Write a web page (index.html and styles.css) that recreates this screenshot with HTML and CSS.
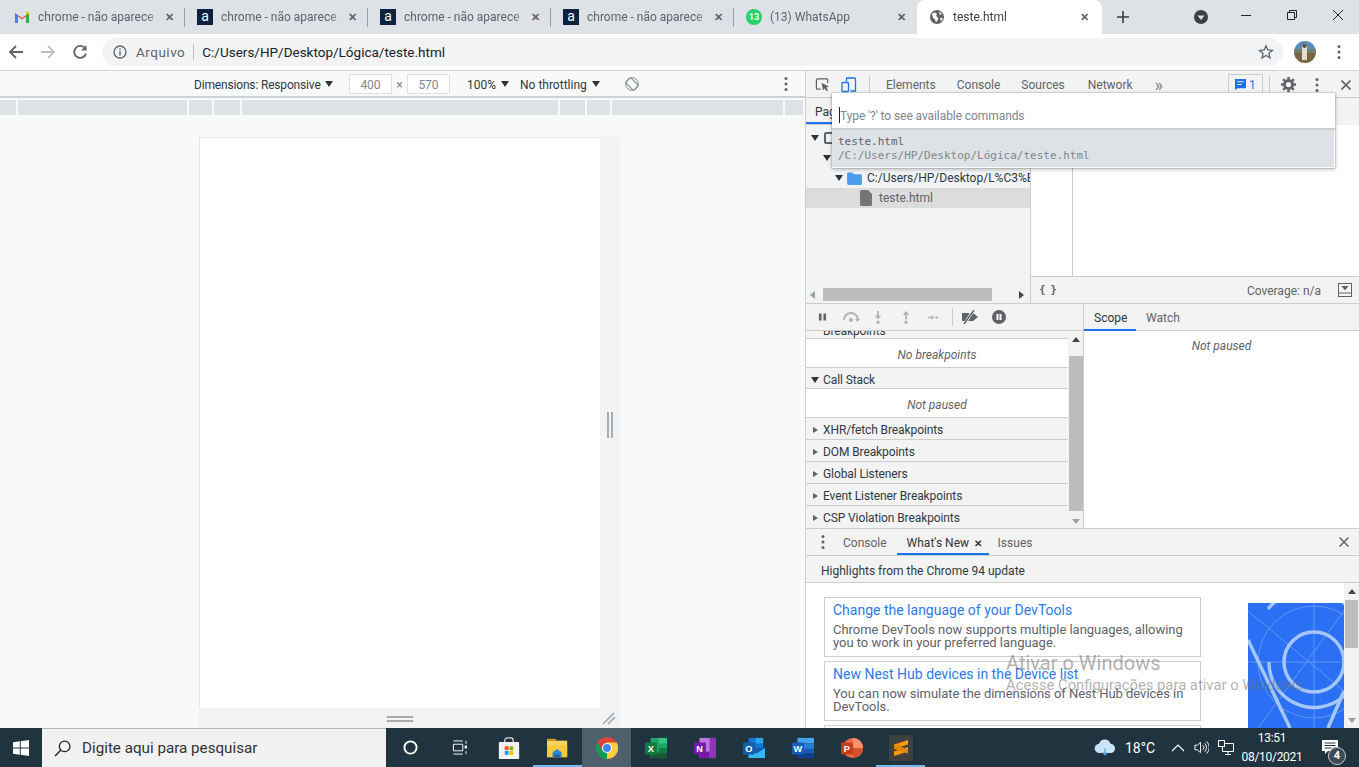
FILE: index.html
```html
<!DOCTYPE html>
<html lang="pt-BR">
<head>
<meta charset="utf-8">
<title>teste.html</title>
<link rel="stylesheet" href="styles.css">
</head>
<body>
<div class="window">

	<!-- abas -->
	<div class="tabstrip">
		<div class="tab">
			<svg class="favicon" viewBox="0 0 16 16"><path d="M1 14V4l7 5 7-5v10h-3V7.500L8 10.500 4 7.500V14z" fill="#ea4335"/><path d="M1 14V4l3 2.200V14z" fill="#4285f4"/><path d="M12 14V6.200L15 4v10z" fill="#34a853"/><path d="M12 6.200 15 4v-.5L13 2.500 12 3.500z" fill="#fbbc04"/></svg>
			<span class="tab_title">chrome - não aparece</span><span class="tab_x">✕</span>
		</div>
		<div class="tab">
			<span class="favicon fav_a">a</span>
			<span class="tab_title">chrome - não aparece</span><span class="tab_x">✕</span>
		</div>
		<div class="tab">
			<span class="favicon fav_a">a</span>
			<span class="tab_title">chrome - não aparece</span><span class="tab_x">✕</span>
		</div>
		<div class="tab">
			<span class="favicon fav_a">a</span>
			<span class="tab_title">chrome - não aparece</span><span class="tab_x">✕</span>
		</div>
		<div class="tab tab_last">
			<span class="favicon fav_wa">13</span>
			<span class="tab_title">(13) WhatsApp</span><span class="tab_x">✕</span>
		</div>
		<div class="tab tab_on">
			<svg class="favicon" viewBox="0 0 16 16"><circle cx="8" cy="8" r="7" fill="#5f6368"/><path d="M3 4.500 6 3.500l2 1.500-1 2 2 1.500v2l-2 3-1-3-2-1.500zM10 2.500l3 2-2 1.500zM11 9h3l-2 3.500z" fill="#fff"/></svg>
			<span class="tab_title">teste.html</span><span class="tab_x">✕</span>
		</div>
		<svg class="new_tab" viewBox="0 0 12 12"><path d="M6 0v12M0 6h12" stroke="#3c4043" stroke-width="1.600"/></svg>
		<svg class="tab_search" viewBox="0 0 14 14"><circle cx="7" cy="7" r="7" fill="#3c4043"/><path d="M3.500 5.500h7L7 10z" fill="#dee1e6"/></svg>
		<div class="win_btns">
			<svg viewBox="0 0 12 12"><path d="M1 6.500h10" stroke="#222" stroke-width="1"/></svg>
			<svg viewBox="0 0 12 12"><path d="M1.500 3.500h7v7h-7zM3.500 3.500v-2h7v7h-2" fill="none" stroke="#222"/></svg>
			<svg viewBox="0 0 12 12"><path d="M1 1l10 10M11 1 1 11" stroke="#222"/></svg>
		</div>
	</div>

	<!-- barra de endereco -->
	<div class="toolbar">
		<svg class="nav_ic" viewBox="0 0 16 16"><path d="M15 8H2M8 2 2 8l6 6" fill="none" stroke="#5f6368" stroke-width="1.800"/></svg>
		<svg class="nav_ic" viewBox="0 0 16 16"><path d="M1 8h13M8 2l6 6-6 6" fill="none" stroke="#bdc1c6" stroke-width="1.800"/></svg>
		<svg class="nav_ic" viewBox="0 0 16 16"><path d="M13.500 5A6 6 0 1 0 14 9.500" fill="none" stroke="#5f6368" stroke-width="1.800"/><path d="M14.500 1v5.500H9z" fill="#5f6368"/></svg>
		<div class="omnibox">
			<svg class="info_ic" viewBox="0 0 14 14"><circle cx="7" cy="7" r="6" fill="none" stroke="#5f6368" stroke-width="1.300"/><path d="M7 6v4.500M7 3.500V5" stroke="#5f6368" stroke-width="1.400"/></svg>
			<span class="omni_label">Arquivo</span>
			<span class="omni_url">C:/Users/HP/Desktop/Lógica/teste.html</span>
			<svg class="star_ic" viewBox="0 0 16 16"><path d="M8 1.800 9.800 6l4.600.4-3.500 3 1.100 4.500L8 11.500 4 13.900l1.100-4.500-3.500-3L6.200 6z" fill="none" stroke="#5f6368" stroke-width="1.300"/></svg>
		</div>
		<svg class="avatar" viewBox="0 0 22 22"><defs><clipPath id="av"><circle cx="11" cy="11" r="11"/></clipPath></defs><g clip-path="url(#av)"><rect width="22" height="10" fill="#5b89b8"/><rect y="8" width="22" height="5" fill="#6f7f6c"/><rect y="12" width="22" height="10" fill="#7a6244"/><rect x="8" y="5" width="5" height="14" fill="#e4dccd"/><circle cx="10.500" cy="5" r="2" fill="#6b4a30"/></g></svg>
		<svg class="kebab kebab_top" viewBox="0 0 4 16"><circle cx="2" cy="2.500" r="1.500"/><circle cx="2" cy="8" r="1.500"/><circle cx="2" cy="13.500" r="1.500"/></svg>
	</div>

	<div class="main">

		<!-- area emulada -->
		<div class="viewport">
			<div class="device_bar">
				<span class="dim_label">Dimensions: Responsive <i class="caret"></i></span>
				<span class="dim_box">400</span><span class="dim_x">×</span><span class="dim_box">570</span>
				<span class="dim_zoom">100% <i class="caret"></i></span>
				<span class="dim_throttle">No throttling <i class="caret"></i></span>
				<svg class="rotate_ic" viewBox="0 0 16 16"><circle cx="8" cy="8" r="6.300" fill="none" stroke="#80868b"/><rect x="4.500" y="2.500" width="7" height="11" rx="1" transform="rotate(-45 8 8)" fill="#f8f9f9" stroke="#80868b"/></svg>
				<svg class="kebab kebab_dev" viewBox="0 0 4 16"><circle cx="2" cy="2.500" r="1.500"/><circle cx="2" cy="8" r="1.500"/><circle cx="2" cy="13.500" r="1.500"/></svg>
			</div>
			<div class="media_bar">
				<span class="m1"></span><span class="m2"></span><span class="m3"></span><span class="m4"></span><span class="m5"></span><span class="m4"></span><span class="m3"></span><span class="m2"></span><span class="m1"></span>
			</div>
			<div class="stage">
				<div class="frame">
					<div class="page"></div>
					<div class="gutter_r"><span class="grip_v"></span></div>
					<div class="gutter_b"><span class="grip_h"></span></div>
					<div class="gutter_c">
						<svg viewBox="0 0 14 14"><path d="M1 13 12 2M6 13l7-7" stroke="#a0a4a8" stroke-width="1.500"/></svg>
					</div>
				</div>
			</div>
		</div>

		<!-- devtools -->
		<div class="devtools">
			<div class="dt_tabs">
				<svg class="dt_ic" viewBox="0 0 16 16"><path d="M6 13H2.500a1 1 0 0 1-1-1V3a1 1 0 0 1 1-1h10a1 1 0 0 1 1 1v3" fill="none" stroke="#5f6368" stroke-width="1.300"/><path d="M7 6.500 15 10l-3 1.200 2 3-1.500 1-2-3L8.500 14z" fill="#5f6368"/></svg>
				<svg class="dt_ic dt_ic2" viewBox="0 0 16 16"><path d="M5.500 1.500h8a1 1 0 0 1 1 1v12h-5M5.500 1.500V5" fill="none" stroke="#1a73e8" stroke-width="1.300"/><rect x="1" y="6" width="6.500" height="9" rx="1" fill="none" stroke="#1a73e8" stroke-width="1.300"/></svg>
				<span class="dt_sep"></span>
				<span class="dt_tab dt_t1">Elements</span>
				<span class="dt_tab">Console</span>
				<span class="dt_tab">Sources</span>
				<span class="dt_tab dt_t4">Network</span>
				<span class="dt_more">»</span>
				<span class="dt_badge"><svg viewBox="0 0 12 12"><path d="M0 0h12v10H3l-3 2z" fill="#1a73e8"/><path d="M2.500 3h7M2.500 6h5" stroke="#fff"/></svg>1</span>
				<span class="dt_sep dt_sep2"></span>
				<svg class="gear" viewBox="0 0 16 16"><circle cx="8" cy="8" r="4.300" fill="none" stroke="#5f6368" stroke-width="3"/><path d="M8 0v3M8 13v3M0 8h3M13 8h3M2.300 2.300l2.100 2.100M11.600 11.600l2.100 2.100M13.700 2.300l-2.100 2.100M4.400 11.600l-2.100 2.100" stroke="#5f6368" stroke-width="2.600"/></svg>
				<svg class="kebab kebab_dt" viewBox="0 0 4 16"><circle cx="2" cy="2.500" r="1.500"/><circle cx="2" cy="8" r="1.500"/><circle cx="2" cy="13.500" r="1.500"/></svg>
				<svg class="dt_close" viewBox="0 0 10 10"><path d="M.5.5l9 9M9.500.5l-9 9" stroke="#5f6368" stroke-width="1.600"/></svg>
			</div>

			<div class="sources">
				<div class="navigator">
					<div class="nav_tabs"><span class="nav_tab">Page</span></div>
					<div class="tree">
						<div class="tree_row tr0"><i class="caret caret_d"></i><span class="sq_ic"></span></div>
						<div class="tree_row tr1"><i class="caret caret_d"></i></div>
						<div class="tree_row tr2"><i class="caret caret_d"></i>
							<svg class="folder_ic" viewBox="0 0 16 14"><path d="M0 2a1.500 1.500 0 0 1 1.500-1.500h4L7.500 2.500h7A1.500 1.500 0 0 1 16 4v8.500a1.500 1.500 0 0 1-1.500 1.500h-13A1.500 1.500 0 0 1 0 12.500z" fill="#4a9cf0"/></svg>
							<span>C:/Users/HP/Desktop/L%C3%B</span></div>
						<div class="tree_row tr3">
							<svg class="file_ic" viewBox="0 0 12 16"><path d="M0 1.500A1.500 1.500 0 0 1 1.500 0H8l4 4v10.500a1.500 1.500 0 0 1-1.500 1.500h-9A1.500 1.500 0 0 1 0 14.500z" fill="#757575"/></svg>
							<span>teste.html</span></div>
					</div>
					<div class="h_scroll">
						<i class="arr_l"></i><span class="h_thumb"></span><i class="arr_r"></i>
					</div>
				</div>
				<div class="editor">
					<div class="editor_body"><span class="gutter_line"></span></div>
					<div class="editor_foot">
						<span class="braces">{ }</span>
						<span class="coverage">Coverage: n/a</span>
						<svg class="foot_ic" viewBox="0 0 14 14"><rect x=".5" y=".5" width="13" height="13" fill="none" stroke="#5f6368"/><path d="M.5 10h13" stroke="#5f6368"/><path d="M3.500 3h7L7 7.500z" fill="#5f6368"/></svg>
					</div>
				</div>
			</div>

			<div class="debugger">
				<div class="dbg_left">
					<div class="dbg_tools">
						<svg class="db1" viewBox="0 0 10 10"><path d="M1 1h3v8H1zM6 1h3v8H6z" fill="#5f6368"/></svg>
						<svg class="db2" viewBox="0 0 18 10"><path d="M2 8a7 7 0 0 1 14 0" fill="none" stroke="#b0b4b8" stroke-width="2"/><circle cx="9" cy="8" r="2" fill="#b0b4b8"/><path d="M13 7h5l-2.500 3z" fill="#b0b4b8"/></svg>
						<svg class="db3 db_into" viewBox="0 0 10 14"><path d="M5 0v6" stroke="#b0b4b8" stroke-width="2"/><path d="M1.500 5h7L5 9z" fill="#b0b4b8"/><circle cx="5" cy="12" r="1.800" fill="#b0b4b8"/></svg>
						<svg class="db3 db_out" viewBox="0 0 10 14"><path d="M5 9V3" stroke="#b0b4b8" stroke-width="2"/><path d="M1.500 4h7L5 0z" fill="#b0b4b8"/><circle cx="5" cy="12" r="1.800" fill="#b0b4b8"/></svg>
						<svg class="db3 db_step" viewBox="0 0 14 10"><path d="M0 5h6" stroke="#b0b4b8" stroke-width="2"/><path d="M5 1.500v7L9 5z" fill="#b0b4b8"/><circle cx="12" cy="5" r="1.800" fill="#b0b4b8"/></svg>
						<span class="dt_sep dbg_sep"></span>
						<svg class="db4" viewBox="0 0 18 14"><path d="M1 3h11l5 4-5 4H1z" fill="#5f6368"/><path d="M3 15 13-1" stroke="#f1f3f4" stroke-width="3"/><path d="M3 14 13 0" stroke="#5f6368" stroke-width="1.500"/></svg>
						<svg class="db5" viewBox="0 0 14 14"><circle cx="7" cy="7" r="7" fill="#5f6368"/><path d="M4.500 4h2v6h-2zM7.500 4h2v6h-2z" fill="#fff"/></svg>
					</div>
					<div class="sections">
						<div class="sec_list">
							<div class="sec_head sec_cut"><span>Breakpoints</span></div>
							<div class="sec_empty">No breakpoints</div>
							<div class="sec_head sec_open"><i class="caret caret_d"></i>Call Stack</div>
							<div class="sec_empty">Not paused</div>
							<div class="sec_head"><i class="caret_r"></i>XHR/fetch Breakpoints</div>
							<div class="sec_head"><i class="caret_r"></i>DOM Breakpoints</div>
							<div class="sec_head"><i class="caret_r"></i>Global Listeners</div>
							<div class="sec_head"><i class="caret_r"></i>Event Listener Breakpoints</div>
							<div class="sec_head"><i class="caret_r"></i>CSP Violation Breakpoints</div>
						</div>
						<div class="v_scroll">
							<i class="arr_u"></i><span class="v_thumb"></span><i class="arr_d"></i>
						</div>
					</div>
				</div>
				<div class="dbg_right">
					<div class="scope_tabs">
						<span class="scope_tab scope_on">Scope</span>
						<span class="scope_tab">Watch</span>
					</div>
					<div class="scope_empty">Not paused</div>
				</div>
			</div>

			<div class="drawer">
				<div class="drawer_tabs">
					<svg class="kebab kebab_dr" viewBox="0 0 4 16"><circle cx="2" cy="2.500" r="1.500"/><circle cx="2" cy="8" r="1.500"/><circle cx="2" cy="13.500" r="1.500"/></svg>
					<span class="dr_tab dr_first">Console</span>
					<span class="dr_tab dr_on">What's New <b>✕</b></span>
					<span class="dr_tab dr_last">Issues</span>
					<svg class="dr_close" viewBox="0 0 10 10"><path d="M.5.5l9 9M9.500.5l-9 9" stroke="#5f6368" stroke-width="1.500"/></svg>
				</div>
				<div class="drawer_head">Highlights from the Chrome 94 update</div>
				<div class="drawer_body">
					<div class="news">
						<div class="card">
							<div class="card_t">Change the language of your DevTools</div>
							<div class="card_p">Chrome DevTools now supports multiple languages, allowing you to work in your preferred language.</div>
						</div>
						<div class="card">
							<div class="card_t">New Nest Hub devices in the Device list</div>
							<div class="card_p">You can now simulate the dimensions of Nest Hub devices in DevTools.</div>
						</div>
						<div class="card"></div>
					</div>
					<svg class="news_img" viewBox="0 0 96 125"><rect width="96" height="125" fill="#2b70f4"/><g fill="none" stroke="#5f96f7"><path d="M0 8 96 88M96 8 10 125M0 59h96M66 0v125"/><circle cx="66" cy="59" r="56"/></g><g fill="none" stroke="#a6c6fb" stroke-width="3.500"><circle cx="66" cy="59" r="30"/><path d="M0 37 42 125M96 88 80 125M20 6A50 45 0 0 1 110 24"/><path d="M21 59A45 45 0 0 0 96 93"/></g></svg>
					<div class="v_scroll v_scroll2">
						<i class="arr_u"></i><span class="v_thumb"></span><i class="arr_d"></i>
					</div>
				</div>
			</div>

			<!-- paleta de comandos -->
			<div class="cmd">
				<div class="cmd_input"><i class="cmd_cursor"></i>Type '?' to see available commands</div>
				<div class="cmd_item">
					<div class="cmd_name">teste.html</div>
					<div class="cmd_path">/C:/Users/HP/Desktop/Lógica/teste.html</div>
				</div>
			</div>
		</div>
	</div>

	<!-- barra de tarefas -->
	<div class="taskbar">
		<div class="start"><svg viewBox="0 0 16 16"><path d="M0 2.300 6.800 1.300v6.200H0zM7.700 1.200 16 0v7.500H7.700zM0 8.400h6.800v6.300L0 13.700zM7.700 8.400H16V16l-8.300-1.200z" fill="#fff"/></svg></div>
		<div class="search">
			<svg viewBox="0 0 16 16"><circle cx="10" cy="6" r="5" fill="none" stroke="#222" stroke-width="1.200"/><path d="M6.300 9.700 1 15" stroke="#222" stroke-width="1.400"/></svg>
			<span>Digite aqui para pesquisar</span>
		</div>
		<div class="apps">
			<div class="app"><svg viewBox="0 0 16 16"><circle cx="8" cy="8" r="6.500" fill="none" stroke="#fff" stroke-width="2"/></svg></div>
			<div class="app"><svg viewBox="0 0 16 16"><path d="M1.500 4.500h10v7h-10zM1.500 1h10M1.500 15h10M15 1v3M15 12v3" fill="none" stroke="#fff"/><rect x="13.500" y="6" width="3" height="3" fill="#fff"/></svg></div>
			<div class="app"><svg viewBox="0 0 24 26"><path d="M7 7V4a3 3 0 0 1 3-3h4a3 3 0 0 1 3 3v3" fill="none" stroke="#ddd" stroke-width="1.500"/><rect y="6" width="24" height="20" rx="1" fill="#f3f3f3"/><rect x="7" y="11" width="4.500" height="4.500" fill="#f25022"/><rect x="12.500" y="11" width="4.500" height="4.500" fill="#7fba00"/><rect x="7" y="16.500" width="4.500" height="4.500" fill="#00a4ef"/><rect x="12.500" y="16.500" width="4.500" height="4.500" fill="#ffb900"/></svg></div>
			<div class="app app_run"><svg viewBox="0 0 24 22"><path d="M0 1h9l2 2h-11z" fill="#d19a14"/><rect y="3" width="22" height="18" fill="#fbd35c"/><path d="M0 8h22v13H0z" fill="#f8c93f"/><path d="M6 21v-5l5-4 5 4v5z" fill="#2a8ad4"/><path d="M8 21v-3h6v3z" fill="#1d5f9e"/></svg></div>
			<div class="app app_on"><svg viewBox="0 0 24 24"><circle cx="12" cy="12" r="12" fill="#db4437"/><path d="M12 12 1.600 18A12 12 0 0 0 14 23.800z" fill="#0f9d58"/><path d="M12 6h10.500A12 12 0 0 1 12 24z" fill="#ffcd40"/><path d="M1.600 18A12 12 0 0 1 1.600 6L7 15z" fill="#0f9d58"/><circle cx="12" cy="12" r="5.500" fill="#fff"/><circle cx="12" cy="12" r="4.300" fill="#4285f4"/></svg></div>
			<div class="app"><svg viewBox="0 0 24 24"><rect x="6" y="1" width="18" height="22" fill="#21a366"/><rect x="15" y="1" width="9" height="6" fill="#33c481"/><rect x="15" y="12" width="9" height="5" fill="#107c41"/><rect x="6" y="17" width="18" height="6" fill="#185c37"/><rect y="6" width="13" height="13" rx="1" fill="#107c41"/><text x="3" y="16" class="app_letter">X</text></svg></div>
			<div class="app"><svg viewBox="0 0 24 24"><rect x="6" y="1" width="18" height="22" fill="#ba77e0"/><rect x="17" y="1" width="7" height="22" fill="#9332bf"/><rect x="6" y="16" width="11" height="7" fill="#7719aa"/><rect y="6" width="13" height="13" rx="1" fill="#7719aa"/><text x="2.500" y="16" class="app_letter">N</text></svg></div>
			<div class="app"><svg viewBox="0 0 24 24"><rect x="6" y="1" width="16" height="12" fill="#0f78d4"/><rect x="14" y="1" width="8" height="6" fill="#28a8ea"/><path d="M6 12h18v11H6z" fill="#0a5fb0"/><path d="M6 12l9 6 9-6v11H6z" fill="#35b8f1"/><rect y="6" width="13" height="13" rx="1" fill="#0f5fa8"/><text x="2.500" y="16" class="app_letter">O</text></svg></div>
			<div class="app"><svg viewBox="0 0 24 24"><rect x="6" y="1" width="18" height="6" fill="#41a5ee"/><rect x="6" y="7" width="18" height="6" fill="#2b7cd3"/><rect x="6" y="13" width="18" height="5" fill="#185abd"/><rect x="6" y="18" width="18" height="5" fill="#103f91"/><rect y="6" width="13" height="13" rx="1" fill="#185abd"/><text x="1.500" y="16" class="app_letter">W</text></svg></div>
			<div class="app"><svg viewBox="0 0 24 24"><circle cx="13" cy="12" r="11" fill="#ed6c47"/><path d="M13 1a11 11 0 0 1 11 11H13z" fill="#ff8f6b"/><path d="M13 12h11a11 11 0 0 1-11 11z" fill="#d35230"/><rect y="6" width="13" height="13" rx="1" fill="#c43e1c"/><text x="3" y="16" class="app_letter">P</text></svg></div>
			<div class="app app_run app_sub"><svg viewBox="0 0 24 26"><rect width="24" height="26" rx="1" fill="#3f3f3f"/><path d="M5 9.500 19 5v4.500L5 14zM5 16.500 19 12v4.500L5 21z" fill="#ff9800"/><path d="M5 9.500 19 14v4.500L5 14z" fill="#e08600"/></svg></div>
		</div>
		<div class="tray">
			<svg class="cloud" viewBox="0 0 24 18"><path d="M6 15a5 5 0 0 1-.5-10A6.500 6.500 0 0 1 18 5a5 5 0 0 1 0 10z" fill="#c9e4f7"/><path d="M12 10v7M9.500 14.500 12 17l2.500-2.500" fill="none" stroke="#4aa3df" stroke-width="1.300"/></svg>
			<span class="temp">18°C</span>
			<svg class="tray_ic chev" viewBox="0 0 14 8"><path d="M1 7l6-6 6 6" fill="none" stroke="#fff" stroke-width="1.200"/></svg>
			<svg class="tray_ic spk" viewBox="0 0 16 16"><path d="M1 5.500h2.500L7 2.500v11l-3.500-3H1z" fill="none" stroke="#fff"/><path d="M9.500 5.500a3.500 3.500 0 0 1 0 5M11.500 3.500a6.500 6.500 0 0 1 0 9M13.500 1.500a9 9 0 0 1 0 13" fill="none" stroke="#fff"/></svg>
			<svg class="tray_ic net" viewBox="0 0 16 16"><path d="M4.500 3.500h11v8h-11zM7 14.500h6M10 11.500v3" fill="none" stroke="#fff"/><rect x=".5" y=".5" width="6" height="6" fill="#20343f" stroke="#fff"/></svg>
			<div class="clock"><div>13:51</div><div>08/10/2021</div></div>
			<div class="notif">
				<svg viewBox="0 0 16 16"><path d="M0 0h16v11H6l-3 3v-3H0z" fill="#fff"/><path d="M2.500 3h11M2.500 5.500h11M2.500 8h7" stroke="#20343f"/></svg>
				<span class="notif_n">4</span>
			</div>
		</div>
	</div>

	<!-- marca d'agua -->
	<div class="watermark">
		<div class="wm1">Ativar o Windows</div>
		<div class="wm2">Acesse Configurações para ativar o Windows.</div>
	</div>
</div>
</body>
</html>
```

FILE: styles.css
```css
* {margin:0; padding:0; box-sizing:border-box}
html, body {height:100%; overflow:hidden}
body {font-family:Roboto, "Liberation Sans", sans-serif; font-size:12px; color:#303942}
svg {display:block; flex:none}
i {font-style:normal}

.window {position:relative; display:flex; flex-direction:column; height:767px; width:1359px}

/* abas */
.tabstrip {display:flex; align-items:center; height:34px; background:#dee1e6; padding-left:2px; flex:none}
.tab {position:relative; display:flex; align-items:center; width:183px; height:34px; padding-left:12px}
.tab::after {content:""; position:absolute; right:0; top:8px; width:1px; height:19px; background:#9aa0a6}
.tab_last::after, .tab_on::after {display:none}
.tab_on {background:#fff; border-radius:8px 8px 0 0; width:185px}
.favicon {width:16px; height:16px; flex:none}
.fav_a {background:#0b2340; color:#fff; font-size:14px; line-height:15px; text-align:center}
.fav_wa {background:#25d366; border-radius:50%; color:#fff; font-size:9px; font-weight:700; line-height:16px; text-align:center}
.tab_title {width:124px; margin-left:8px; overflow:hidden; white-space:nowrap; color:#5f6368; font-size:12px; -webkit-mask-image:linear-gradient(90deg,#000 88%,transparent)}
.tab_on .tab_title {color:#3c4043}
.tab_x {margin-left:3px; font-size:11px; font-weight:700; color:#5f6368}
.new_tab {width:12px; height:12px; margin-left:15px}
.tab_search {width:14px; height:14px; margin-left:65px}
.win_btns {display:flex; align-items:center; gap:34px; margin-left:auto; padding-right:15px; height:30px; margin-top:-4px}
.win_btns svg {width:12px; height:12px}

/* barra de endereco */
.toolbar {position:relative; display:flex; align-items:center; height:37px; background:#fff; padding-left:8px; flex:none; border-bottom:1px solid #d0d2d5}
.nav_ic {width:16px; height:16px; margin-right:16px}
.omnibox {display:flex; align-items:center; width:1181px; height:28px; margin-left:-2px; background:#f1f3f4; border-radius:14px; padding-left:11px}
.info_ic {width:14px; height:14px}
.omni_label {margin-left:9px; padding-right:8px; border-right:1px solid #bdc1c6; line-height:16px; color:#5f6368; font-size:13.500px; letter-spacing:.5px}
.omni_url {margin-left:8px; font-size:13.500px; color:#202124}
.star_ic {width:16px; height:16px; margin-left:auto; margin-right:9px}
.avatar {width:22px; height:22px; margin-left:11px}
.kebab {width:4px; height:16px; fill:#5f6368}
.kebab_top {margin-left:21px}

.main {display:flex; flex:1; min-height:0}

/* area emulada */
.viewport {display:flex; flex-direction:column; width:805px; background:#f8f9f9; flex:none}
.device_bar {display:flex; align-items:center; height:27px; flex:none; padding-left:194px; border-bottom:2px solid #cfd0d2; color:#303942}
.caret {display:inline-block; width:0; height:0; border:4px solid transparent; border-top:6px solid #333; border-bottom:0; vertical-align:2px; margin-left:2px}
.dim_label {width:155px; letter-spacing:-.17px; padding-top:2px}
.dim_box {width:43px; height:20px; border:1px solid #e0e0e0; background:#fff; text-align:center; line-height:20px; color:#80868b}
.dim_x {width:15px; text-align:center; color:#80868b; padding-top:3px}
.dim_zoom {margin-left:17px; width:53px; padding-top:2px}
.dim_throttle {width:104px; padding-top:2px}
.rotate_ic {width:16px; height:16px}
.kebab_dev {margin-left:auto; margin-right:17px}
.media_bar {display:flex; gap:2px; height:16px; margin-top:2px; padding-right:2px; flex:none}
.media_bar span {background:#dee1e6; height:15px}
.media_bar .m1 {width:16px}
.media_bar .m2 {width:169px}
.media_bar .m3 {width:23px}
.media_bar .m4 {width:26px}
.media_bar .m5 {width:316px}
.media_bar .m4 ~ .m4 {width:25px}
.media_bar .m2 ~ .m2 {width:171px}
.media_bar .m1:last-child {flex:1}
.stage {flex:1; padding:21px 0 0 199px; min-height:0}
.frame {display:grid; grid-template-columns:401px 20px; grid-template-rows:571px 20px; width:421px; height:591px}
.page {background:#fff; border:1px solid #e4e5e6; border-right:0; border-bottom:0}
.gutter_r {display:flex; justify-content:center; align-items:center; background:#f1f3f4}
.grip_v {width:6px; height:26px; border-left:2px solid #a8abae; border-right:2px solid #a8abae; margin-top:4px}
.gutter_b {display:flex; justify-content:center; align-items:flex-start; background:#f1f3f4; padding-top:8px}
.grip_h {width:26px; height:6px; border-top:2px solid #a8abae; border-bottom:2px solid #a8abae}
.gutter_c {background:#f1f3f4; display:flex; align-items:flex-end}
.gutter_c svg {width:14px; height:14px; margin-left:2px; margin-bottom:3px}

/* devtools */
.devtools {position:relative; display:flex; flex-direction:column; flex:1; min-width:0; border-left:1px solid #cbcdcf; background:#fff}
.dt_tabs {display:flex; align-items:center; height:27px; flex:none; background:#f3f3f3; border-bottom:1px solid #cbcdcf; padding-left:9px; padding-top:1px; color:#5f6368}
.dt_ic {width:15px; height:15px}
.dt_ic2 {margin-left:11px; width:16px; height:17px}
.dt_sep {width:1px; height:17px; background:#cbcdcf; margin-left:12px}
.dt_tab {margin-left:21px}
.dt_t1 {margin-left:16px}
.dt_t4 {margin-left:23px}
.dt_more {margin-left:22px; font-size:18px; line-height:14px; color:#80868b}
.dt_badge {display:flex; align-items:center; gap:3px; width:35px; height:21px; margin-left:65px; padding-left:6px; border:1px solid #cbcdcf; color:#1a73e8; font-size:12px}
.dt_badge svg {width:11px; height:11px}
.dt_sep2 {margin-left:6px}
.gear {width:15px; height:15px; margin-left:11px}
.kebab_dt {margin-left:19px}
.dt_close {width:10px; height:10px; margin-left:22px}

.sources {display:flex; height:206px; flex:none; border-bottom:1px solid #cbcdcf; background:#f3f3f3}
.navigator {display:flex; flex-direction:column; width:225px; flex:none; border-right:1px solid #cbcdcf; background:#f1f3f4}
.nav_tabs {height:27px; flex:none; border-bottom:1px solid #cbcdcf; background:#f3f3f3}
.nav_tab {display:inline-block; width:60px; height:26px; padding:7px 0 0 9px; border-bottom:2px solid #1a73e8; color:#333}
.tree {flex:1; padding-top:3px; min-height:0}
.tree_row {display:flex; align-items:center; height:20px; white-space:nowrap; overflow:hidden; color:#303942}
.tr0 {padding-left:5px}
.tr1 {padding-left:17px}
.tr2 {padding-left:29px}
.tr3 {padding-left:54px; background:#dcdcdc; color:#5f6368}
.caret_d {margin-left:0; vertical-align:0}
.sq_ic {width:11px; height:12px; margin-left:5px; border:2px solid #5f6368; border-radius:2px}
.folder_ic {width:15px; height:13px; margin-left:4px; margin-right:5px}
.file_ic {width:12px; height:16px; margin-right:7px}
.h_scroll {display:flex; align-items:center; height:15px; margin-bottom:1px; flex:none; padding-left:4px}
.arr_l {width:0; height:0; border:4px solid transparent; border-left:0; border-right:5px solid #9aa0a6}
.arr_r {width:0; height:0; border:4px solid transparent; border-right:0; border-left:5px solid #444; margin-left:27px}
.h_thumb {width:169px; height:13px; margin-left:8px; background:#bdbdbd}
.editor {display:flex; flex-direction:column; flex:1; min-width:0}
.editor_body {flex:1; background:#fff; border-top:27px solid #f3f3f3}
.gutter_line {display:block; width:42px; height:100%; border-right:1px solid #cbcdcf}
.editor_foot {display:flex; align-items:center; height:27px; flex:none; border-top:1px solid #cbcdcf; padding-left:8px; color:#5f6368}
.braces {font-family:"DejaVu Sans Mono", monospace; font-weight:700; font-size:11px; letter-spacing:-1px; margin-top:-2px}
.coverage {margin-left:auto; padding-top:1px}
.foot_ic {width:14px; height:14px; margin-left:17px; margin-right:7px}

.debugger {display:flex; height:225px; flex:none; border-bottom:1px solid #cbcdcf}
.dbg_left {display:flex; flex-direction:column; width:278px; flex:none; border-right:1px solid #cbcdcf}
.dbg_tools {display:flex; align-items:center; height:27px; flex:none; background:#f3f3f3; border-bottom:1px solid #cbcdcf; padding-left:12px}
.db1 {width:9px; height:10px}
.db2 {width:18px; height:10px; margin-left:15px}
.db3 {width:10px; height:13px}
.db_into {margin-left:13px}
.db_out {margin-left:18px}
.db_step {margin-left:17px}
.dbg_sep {margin-left:14px; height:18px}
.db4 {width:18px; height:14px; margin-left:8px}
.db5 {width:14px; height:14px; margin-left:13px}
.sections {display:flex; flex:1; min-height:0}
.sec_list {flex:1; min-width:0}
.sec_head {display:flex; align-items:center; height:22px; padding:3px 0 0 7px; background:#f3f3f3; border-bottom:1px solid #cbcdcf; color:#303942; letter-spacing:-.1px}
.sec_head:last-child {border-bottom:0; padding-top:1px}
.sec_cut {height:8px; align-items:flex-end; padding:0 0 0 17px; overflow:hidden}
.sec_cut span {line-height:14px}
.sec_open {height:21px; padding:4px 0 0 5px}
.sec_open .caret {margin-right:4px; margin-left:0}
.caret_r {width:0; height:0; margin-right:5px; margin-left:0; border:3.500px solid transparent; border-right:0; border-left:5px solid #5f6368}
.sec_empty {height:29px; background:#fff; border-bottom:1px solid #cbcdcf; text-align:center; line-height:33px; font-style:italic; color:#5f6368}
.v_scroll {display:flex; flex-direction:column; align-items:center; width:15px; flex:none; background:#f3f3f3; padding:6px 0 4px}
.arr_u {width:0; height:0; border:4px solid transparent; border-top:0; border-bottom:5px solid #444}
.arr_d {width:0; height:0; border:4px solid transparent; border-bottom:0; border-top:5px solid #9aa0a6; margin-top:auto}
.v_thumb {width:14px; height:155px; margin-top:14px; background:#bdbdbd}
.dbg_right {flex:1; min-width:0}
.scope_tabs {display:flex; height:27px; background:#f3f3f3; border-bottom:1px solid #cbcdcf}
.scope_tab {padding:7px 10px 0; height:27px; color:#5f6368}
.scope_on {width:52px; border-bottom:2px solid #1a73e8; color:#333}
.scope_empty {margin-top:8px; text-align:center; font-style:italic; color:#5f6368}

.drawer {display:flex; flex-direction:column; flex:1; min-height:0}
.drawer_tabs {display:flex; align-items:center; height:27px; flex:none; background:#f3f3f3; border-bottom:1px solid #cbcdcf; padding-left:15px; color:#5f6368}
.kebab_dr {margin-right:10px}
.dr_tab {padding:0 10px; height:26px; line-height:29px}
.dr_first {padding:0 0 0 8px}
.dr_on {width:92px; margin-left:10px; padding:0 0 0 10px; color:#333; border-bottom:2px solid #1a73e8; white-space:nowrap}
.dr_on b {font-size:10px; margin-left:2px}
.dr_last {padding-left:9px}
.dr_close {width:10px; height:10px; margin-left:auto; margin-right:10px}
.drawer_head {height:27px; flex:none; padding:8px 0 0 15px; background:#f3f3f3; border-bottom:1px solid #cbcdcf; color:#303942}
.drawer_body {display:flex; flex:1; min-height:0; overflow:hidden; padding:14px 0 0 18px}
.news {display:flex; flex-direction:column; gap:4px; width:377px; flex:none}
.card {height:60px; flex:none; border:1px solid #cbcdcf; padding:3px 8px 0; background:#fff}
.card_t {color:#2b7be9; font-size:14px; line-height:18px}
.card_p {margin-top:4px; color:#5f6368; font-size:13px; line-height:13px; letter-spacing:-.03px}
.news_img {width:96px; height:125px; margin:6px 0 0 47px}
.v_scroll2 {height:145px; margin-top:-14px; padding:6px 0 5px}
.v_scroll2 .v_thumb {width:13px; height:48px; margin-top:6px}

/* paleta de comandos */
.cmd {position:absolute; left:26px; top:22px; width:503px; height:75px; background:#fff; box-shadow:0 0 0 1px rgba(0,0,0,.08), 0 1px 4px rgba(0,0,0,.3)}
.cmd_input {position:relative; height:37px; padding:14px 0 0 8px; border-bottom:2px solid #cbcdcf; color:#80868b; line-height:18px; letter-spacing:-.08px}
.cmd_cursor {position:absolute; left:7px; top:14px; width:1px; height:16px; background:#202124}
.cmd_item {height:37px; margin-right:1px; padding:5px 0 0 6px; background:#dee1e6; font-family:"DejaVu Sans Mono", monospace; font-size:11px; line-height:14px}
.cmd_name {color:#5f6368}
.cmd_path {color:#80868b}

/* barra de tarefas */
.taskbar {display:flex; height:39px; flex:none; background:#20343f; color:#fff}
.start {display:flex; align-items:center; justify-content:center; width:42px; flex:none}
.start svg {width:16px; height:16px}
.search {display:flex; align-items:center; width:344px; flex:none; background:#f1f1f1; border-top:1px solid #b8bcbe; color:#333; padding-left:12px; font-size:15.200px}
.search svg {width:17px; height:17px; margin-right:11px}
.apps {display:flex; flex:none}
.app {display:flex; align-items:center; justify-content:center; width:49px; height:39px; flex:none}
.app svg {width:22px; height:22px}
.app:nth-child(-n+2) svg {width:15px; height:15px}
.app_on {background:#4d606b}
.app_run {box-shadow:inset 0 -2px 0 #76b9ed}
.app_sub svg {width:24px; height:26px}
.app_letter {fill:#fff; font-family:"Liberation Sans", sans-serif; font-size:10px; font-weight:700}
.tray {display:flex; align-items:center; flex:1; padding-left:169px}
.cloud {width:22px; height:17px}
.temp {width:30px; margin-left:9px; font-size:14px}
.tray_ic {width:14px}
.chev {height:8px; margin-left:16px}
.spk {width:15px; height:15px; margin-left:9px}
.net {width:16px; height:16px; margin-left:9px}
.clock {width:70px; margin-left:3px; text-align:center; font-size:12px; line-height:19px; padding-top:1px; letter-spacing:-.3px}
.notif {position:relative; margin-left:15px; width:20px}
.notif svg {width:16px; height:16px}
.notif_n {position:absolute; left:6px; top:7px; width:18px; height:18px; border-radius:50%; background:#3c4a52; border:1.500px solid #20343f; outline:1px solid #ccc; outline-offset:-1px; text-align:center; font-size:11px; font-weight:700; line-height:15px}

/* marca d'agua */
.watermark {position:absolute; left:1006px; top:650px; color:rgba(110,110,110,.55); pointer-events:none; white-space:nowrap}
.wm1 {font-size:20px; line-height:26px}
.wm2 {font-size:14.800px; line-height:18px}
```
